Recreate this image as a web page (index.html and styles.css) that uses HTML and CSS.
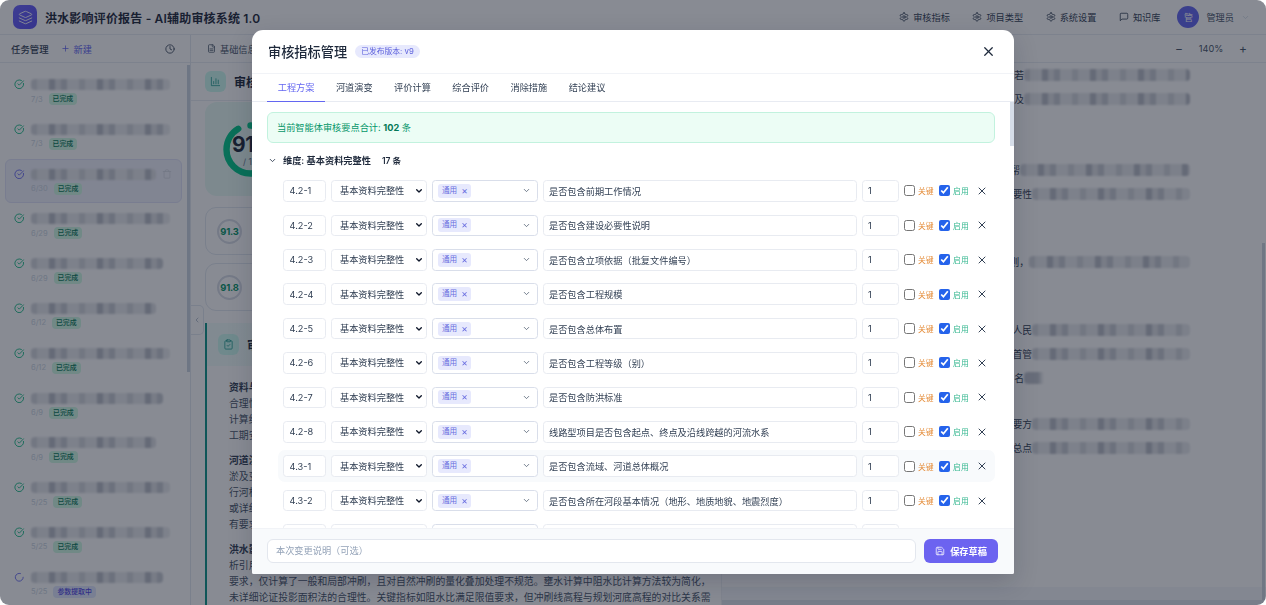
FILE: index.html
```html
<!DOCTYPE html>
<html lang="zh-CN">
<head>
<meta charset="utf-8">
<title>洪水影响评价报告 - AI辅助审核系统 1.0</title>
<link rel="stylesheet" href="styles.css">
</head>
<body>
<svg class="defs" width="0" height="0" aria-hidden="true">
  <symbol id="i-gear" viewBox="0 0 24 24"><path d="M12.22 2h-.44a2 2 0 0 0-2 2v.18a2 2 0 0 1-1 1.73l-.43.25a2 2 0 0 1-2 0l-.15-.08a2 2 0 0 0-2.73.73l-.22.38a2 2 0 0 0 .73 2.73l.15.1a2 2 0 0 1 1 1.72v.51a2 2 0 0 1-1 1.74l-.15.09a2 2 0 0 0-.73 2.73l.22.38a2 2 0 0 0 2.73.73l.15-.08a2 2 0 0 1 2 0l.43.25a2 2 0 0 1 1 1.73V20a2 2 0 0 0 2 2h.44a2 2 0 0 0 2-2v-.18a2 2 0 0 1 1-1.73l.43-.25a2 2 0 0 1 2 0l.15.08a2 2 0 0 0 2.73-.73l.22-.39a2 2 0 0 0-.73-2.73l-.15-.08a2 2 0 0 1-1-1.74v-.5a2 2 0 0 1 1-1.74l.15-.09a2 2 0 0 0 .73-2.73l-.22-.38a2 2 0 0 0-2.73-.73l-.15.08a2 2 0 0 1-2 0l-.43-.25a2 2 0 0 1-1-1.73V4a2 2 0 0 0-2-2z"/><circle cx="12" cy="12" r="3"/></symbol>
  <symbol id="i-check" viewBox="0 0 24 24"><path d="M21.801 10A10 10 0 1 1 17 3.335"/><path d="m9 11 3 3L22 4"/></symbol>
  <symbol id="i-x" viewBox="0 0 24 24"><path d="M18 6 6 18"/><path d="m6 6 12 12"/></symbol>
  <symbol id="i-down" viewBox="0 0 24 24"><path d="m6 9 6 6 6-6"/></symbol>
</svg>

<div class="app">
  <header class="topbar">
    <div class="logo">
      <svg class="logo-icon" viewBox="0 0 24 24"><path d="m12.83 2.18a2 2 0 0 0-1.66 0L2.6 6.08a1 1 0 0 0 0 1.83l8.58 3.91a2 2 0 0 0 1.66 0l8.58-3.9a1 1 0 0 0 0-1.83Z"/><path d="m22 17.65-9.17 4.16a2 2 0 0 1-1.66 0L2 17.65"/><path d="m22 12.65-9.17 4.16a2 2 0 0 1-1.66 0L2 12.65"/></svg>
    </div>
    <h1 class="app-title">洪水影响评价报告 - AI辅助审核系统 1.0</h1>
    <nav class="topnav">
      <a class="nav-link"><svg class="nav-icon"><use href="#i-gear"/></svg>审核指标</a>
      <a class="nav-link"><svg class="nav-icon"><use href="#i-gear"/></svg>项目类型</a>
      <a class="nav-link"><svg class="nav-icon"><use href="#i-gear"/></svg>系统设置</a>
      <a class="nav-link"><svg class="nav-icon" viewBox="0 0 24 24"><path d="M21 15a2 2 0 0 1-2 2H7l-4 4V5a2 2 0 0 1 2-2h14a2 2 0 0 1 2 2z"/></svg>知识库</a>
    </nav>
    <div class="user">
      <span class="avatar">管</span>
      <span class="user-name">管理员</span>
      <svg class="user-caret"><use href="#i-down"/></svg>
    </div>
  </header>

  <div class="main">
    <aside class="sidebar">
      <div class="side-head">
        <span class="side-title">任务管理</span>
        <span class="side-new"><svg viewBox="0 0 24 24"><path d="M5 12h14"/><path d="M12 5v14"/></svg>新建</span>
        <svg class="clock" viewBox="0 0 24 24"><circle cx="12" cy="12" r="10"/><path d="M12 6v6l4 2"/></svg>
      </div>
      <div class="task-list">
        <div class="task"><svg class="task-icon"><use href="#i-check"/></svg><div class="task-body"><div class="blur t1"></div><div class="task-meta"><span class="date">7/3</span><span class="tag-done">已完成</span></div></div></div>
        <div class="task"><svg class="task-icon"><use href="#i-check"/></svg><div class="task-body"><div class="blur t1"></div><div class="task-meta"><span class="date">7/3</span><span class="tag-done">已完成</span></div></div></div>
        <div class="task task-active"><svg class="task-icon icon-purple"><use href="#i-check"/></svg><div class="task-body"><div class="blur t2"></div><div class="task-meta"><span class="date">6/30</span><span class="tag-done">已完成</span></div></div>
          <svg class="task-trash" viewBox="0 0 24 24"><path d="M3 6h18"/><path d="M19 6v14a2 2 0 0 1-2 2H7a2 2 0 0 1-2-2V6"/><path d="M8 6V4a2 2 0 0 1 2-2h4a2 2 0 0 1 2 2v2"/></svg></div>
        <div class="task"><svg class="task-icon"><use href="#i-check"/></svg><div class="task-body"><div class="blur t1"></div><div class="task-meta"><span class="date">6/29</span><span class="tag-done">已完成</span></div></div></div>
        <div class="task"><svg class="task-icon"><use href="#i-check"/></svg><div class="task-body"><div class="blur t3"></div><div class="task-meta"><span class="date">6/29</span><span class="tag-done">已完成</span></div></div></div>
        <div class="task"><svg class="task-icon"><use href="#i-check"/></svg><div class="task-body"><div class="blur t2"></div><div class="task-meta"><span class="date">6/12</span><span class="tag-done">已完成</span></div></div></div>
        <div class="task"><svg class="task-icon"><use href="#i-check"/></svg><div class="task-body"><div class="blur t1"></div><div class="task-meta"><span class="date">6/12</span><span class="tag-done">已完成</span></div></div></div>
        <div class="task"><svg class="task-icon"><use href="#i-check"/></svg><div class="task-body"><div class="blur t3"></div><div class="task-meta"><span class="date">6/9</span><span class="tag-done">已完成</span></div></div></div>
        <div class="task"><svg class="task-icon"><use href="#i-check"/></svg><div class="task-body"><div class="blur t2"></div><div class="task-meta"><span class="date">6/9</span><span class="tag-done">已完成</span></div></div></div>
        <div class="task"><svg class="task-icon"><use href="#i-check"/></svg><div class="task-body"><div class="blur t1"></div><div class="task-meta"><span class="date">5/25</span><span class="tag-done">已完成</span></div></div></div>
        <div class="task"><svg class="task-icon"><use href="#i-check"/></svg><div class="task-body"><div class="blur t1"></div><div class="task-meta"><span class="date">5/25</span><span class="tag-done">已完成</span></div></div></div>
        <div class="task"><svg class="task-icon icon-purple" viewBox="0 0 24 24"><path d="M21 12a9 9 0 1 1-6.219-8.56"/></svg><div class="task-body"><div class="blur t3"></div><div class="task-meta"><span class="date">5/25</span><span class="tag-busy">参数提取中</span></div></div></div>
      </div>
      <div class="side-thumb"></div>
    </aside>

    <section class="center">
      <button class="collapse"><svg viewBox="0 0 24 24"><path d="m15 18-6-6 6-6"/></svg></button>
      <div class="center-tabs">
        <svg class="file-icon" viewBox="0 0 24 24"><path d="M15 2H6a2 2 0 0 0-2 2v16a2 2 0 0 0 2 2h12a2 2 0 0 0 2-2V7Z"/><path d="M14 2v4a2 2 0 0 0 2 2h4"/><path d="M16 13H8"/><path d="M16 17H8"/></svg>
        <span>基础信息</span>
      </div>
      <div class="center-head">
        <span class="square-icon"><svg viewBox="0 0 24 24"><path d="M3 3v18h18"/><path d="M8 17v-5"/><path d="M13 17V6"/><path d="M18 17v-8"/></svg></span>
        <span class="center-title">审核结果</span>
      </div>
      <div class="center-body">
        <div class="score-card">
          <div class="ring">
            <svg viewBox="0 0 55 55"><circle class="ring-arc" cx="27.5" cy="27.5" r="24"/></svg>
            <div class="ring-text"><b>91.5</b><span>/ 100</span></div>
          </div>
        </div>
        <div class="mini-card"><div class="mini-ring">91.3</div></div>
        <div class="mini-card"><div class="mini-ring">91.8</div></div>
        <div class="detail">
          <div class="detail-head">
            <span class="square-icon"><svg viewBox="0 0 24 24"><rect x="8" y="2" width="8" height="4" rx="1"/><path d="M16 4h2a2 2 0 0 1 2 2v14a2 2 0 0 1-2 2H6a2 2 0 0 1-2-2V6a2 2 0 0 1 2-2h2"/><path d="m9 14 2 2 4-4"/></svg></span>
            <span class="center-title">审核意见</span>
          </div>
          <div class="detail-text">
            <p class="para-head">资料与方法</p>
            <p>合理性分析基本满足要求</p>
            <p>计算结果较为完整</p>
            <p>工期安排基本合理</p>
            <p class="para-head gap">河道演变</p>
            <p>淤及变化分析基本完整</p>
            <p>行河标准符合要求</p>
            <p>或详细说明</p>
            <p>有要求</p>
            <p class="para-head gap">洪水影响</p>
            <p>析引用资料基本可靠</p>
            <p>要求，仅计算了一般和局部冲刷，且对自然冲刷的量化叠加处理不规范。壅水计算中阻水比计算方法较为简化，</p>
            <p>未详细论证投影面积法的合理性。关键指标如阻水比满足限值要求，但冲刷线高程与规划河底高程的对比关系需</p>
          </div>
        </div>
      </div>
    </section>

    <section class="doc">
      <div class="doc-tools">
        <span class="zoom-btn">−</span><span class="zoom-val">140%</span><span class="zoom-btn">+</span>
      </div>
      <div class="doc-text">
        <div class="doc-line"><span>若</span><i class="blur d1"></i></div>
        <div class="doc-line"><span>及</span><i class="blur d1"></i></div>
        <div class="doc-line sec"><span>帮</span><i class="blur d2"></i></div>
        <div class="doc-line"><span>要性</span><i class="blur d4"></i></div>
        <div class="doc-line sec2"><span>则，</span><i class="blur d5"></i></div>
        <div class="doc-line sec2"><span>人民</span><i class="blur d4"></i></div>
        <div class="doc-line"><span>首管</span><i class="blur d4"></i></div>
        <div class="doc-line"><span>名</span><i class="blur d3"></i></div>
        <div class="doc-line sec3"><span>要方</span><i class="blur d4"></i></div>
        <div class="doc-line"><span>总点</span><i class="blur d4"></i></div>
      </div>
      <div class="doc-foot"></div>
      <div class="doc-hbar"></div>
      <div class="doc-thumb"></div>
    </section>
  </div>
</div>

<div class="overlay"></div>

<div class="modal">
  <div class="modal-head">
    <h2 class="modal-title">审核指标管理</h2>
    <span class="version">已发布版本: v9</span>
    <svg class="modal-close"><use href="#i-x"/></svg>
  </div>
  <div class="tabs">
    <span class="tab tab-on">工程方案</span>
    <span class="tab">河道演变</span>
    <span class="tab">评价计算</span>
    <span class="tab">综合评价</span>
    <span class="tab">消除措施</span>
    <span class="tab">结论建议</span>
  </div>
  <div class="modal-body">
    <div class="alert">当前智能体审核要点合计: <b>102</b> 条</div>
    <div class="dim-head">
      <svg class="dim-caret"><use href="#i-down"/></svg>
      <span class="dim-name">维度: 基本资料完整性</span>
      <span class="dim-count">17 条</span>
    </div>
    <div class="rows">
      <div class="row"><input class="field f-id" value="4.2-1"><select class="field f-sel"><option>基本资料完整性</option></select><div class="field f-tags"><span class="chip">通用<span class="chip-x">×</span></span><svg class="tags-caret"><use href="#i-down"/></svg></div><input class="field f-text" value="是否包含前期工作情况"><input class="field f-num" value="1"><label class="chk key"><input type="checkbox">关键</label><label class="chk on"><input type="checkbox" checked>启用</label><svg class="row-x"><use href="#i-x"/></svg></div>
      <div class="row"><input class="field f-id" value="4.2-2"><select class="field f-sel"><option>基本资料完整性</option></select><div class="field f-tags"><span class="chip">通用<span class="chip-x">×</span></span><svg class="tags-caret"><use href="#i-down"/></svg></div><input class="field f-text" value="是否包含建设必要性说明"><input class="field f-num" value="1"><label class="chk key"><input type="checkbox">关键</label><label class="chk on"><input type="checkbox" checked>启用</label><svg class="row-x"><use href="#i-x"/></svg></div>
      <div class="row"><input class="field f-id" value="4.2-3"><select class="field f-sel"><option>基本资料完整性</option></select><div class="field f-tags"><span class="chip">通用<span class="chip-x">×</span></span><svg class="tags-caret"><use href="#i-down"/></svg></div><input class="field f-text" value="是否包含立项依据（批复文件编号）"><input class="field f-num" value="1"><label class="chk key"><input type="checkbox">关键</label><label class="chk on"><input type="checkbox" checked>启用</label><svg class="row-x"><use href="#i-x"/></svg></div>
      <div class="row"><input class="field f-id" value="4.2-4"><select class="field f-sel"><option>基本资料完整性</option></select><div class="field f-tags"><span class="chip">通用<span class="chip-x">×</span></span><svg class="tags-caret"><use href="#i-down"/></svg></div><input class="field f-text" value="是否包含工程规模"><input class="field f-num" value="1"><label class="chk key"><input type="checkbox">关键</label><label class="chk on"><input type="checkbox" checked>启用</label><svg class="row-x"><use href="#i-x"/></svg></div>
      <div class="row"><input class="field f-id" value="4.2-5"><select class="field f-sel"><option>基本资料完整性</option></select><div class="field f-tags"><span class="chip">通用<span class="chip-x">×</span></span><svg class="tags-caret"><use href="#i-down"/></svg></div><input class="field f-text" value="是否包含总体布置"><input class="field f-num" value="1"><label class="chk key"><input type="checkbox">关键</label><label class="chk on"><input type="checkbox" checked>启用</label><svg class="row-x"><use href="#i-x"/></svg></div>
      <div class="row"><input class="field f-id" value="4.2-6"><select class="field f-sel"><option>基本资料完整性</option></select><div class="field f-tags"><span class="chip">通用<span class="chip-x">×</span></span><svg class="tags-caret"><use href="#i-down"/></svg></div><input class="field f-text" value="是否包含工程等级（别）"><input class="field f-num" value="1"><label class="chk key"><input type="checkbox">关键</label><label class="chk on"><input type="checkbox" checked>启用</label><svg class="row-x"><use href="#i-x"/></svg></div>
      <div class="row"><input class="field f-id" value="4.2-7"><select class="field f-sel"><option>基本资料完整性</option></select><div class="field f-tags"><span class="chip">通用<span class="chip-x">×</span></span><svg class="tags-caret"><use href="#i-down"/></svg></div><input class="field f-text" value="是否包含防洪标准"><input class="field f-num" value="1"><label class="chk key"><input type="checkbox">关键</label><label class="chk on"><input type="checkbox" checked>启用</label><svg class="row-x"><use href="#i-x"/></svg></div>
      <div class="row"><input class="field f-id" value="4.2-8"><select class="field f-sel"><option>基本资料完整性</option></select><div class="field f-tags"><span class="chip">通用<span class="chip-x">×</span></span><svg class="tags-caret"><use href="#i-down"/></svg></div><input class="field f-text" value="线路型项目是否包含起点、终点及沿线跨越的河流水系"><input class="field f-num" value="1"><label class="chk key"><input type="checkbox">关键</label><label class="chk on"><input type="checkbox" checked>启用</label><svg class="row-x"><use href="#i-x"/></svg></div>
      <div class="row row-hover"><input class="field f-id" value="4.3-1"><select class="field f-sel"><option>基本资料完整性</option></select><div class="field f-tags"><span class="chip">通用<span class="chip-x">×</span></span><svg class="tags-caret"><use href="#i-down"/></svg></div><input class="field f-text" value="是否包含流域、河道总体概况"><input class="field f-num" value="1"><label class="chk key"><input type="checkbox">关键</label><label class="chk on"><input type="checkbox" checked>启用</label><svg class="row-x"><use href="#i-x"/></svg></div>
      <div class="row"><input class="field f-id" value="4.3-2"><select class="field f-sel"><option>基本资料完整性</option></select><div class="field f-tags"><span class="chip">通用<span class="chip-x">×</span></span><svg class="tags-caret"><use href="#i-down"/></svg></div><input class="field f-text" value="是否包含所在河段基本情况（地形、地质地貌、地震烈度）"><input class="field f-num" value="1"><label class="chk key"><input type="checkbox">关键</label><label class="chk on"><input type="checkbox" checked>启用</label><svg class="row-x"><use href="#i-x"/></svg></div>
      <div class="row"><input class="field f-id" value="4.3-3"><select class="field f-sel"><option>基本资料完整性</option></select><div class="field f-tags"><span class="chip">通用<span class="chip-x">×</span></span><svg class="tags-caret"><use href="#i-down"/></svg></div><input class="field f-text" value="是否包含水文气象资料"><input class="field f-num" value="1"><label class="chk key"><input type="checkbox">关键</label><label class="chk on"><input type="checkbox" checked>启用</label><svg class="row-x"><use href="#i-x"/></svg></div>
    </div>
    <div class="modal-thumb"></div>
  </div>
  <div class="modal-foot">
    <input class="note" placeholder="本次变更说明（可选）">
    <button class="save">
      <svg viewBox="0 0 24 24"><path d="M15.2 3a2 2 0 0 1 1.4.6l3.8 3.8a2 2 0 0 1 .6 1.4V19a2 2 0 0 1-2 2H5a2 2 0 0 1-2-2V5a2 2 0 0 1 2-2z"/><path d="M17 21v-7a1 1 0 0 0-1-1H8a1 1 0 0 0-1 1v7"/><path d="M7 3v4a1 1 0 0 0 1 1h7"/></svg>
      保存草稿
    </button>
  </div>
</div>
</body>
</html>
```

FILE: styles.css
```css
* { box-sizing: border-box; }
html, body { margin: 0; height: 100%; overflow: hidden; background: #fff; }
body { font-family: Inter, "Noto Sans CJK SC", sans-serif; font-size: 9.2px; color: #334155; }
svg { fill: none; stroke: currentColor; stroke-width: 2; stroke-linecap: round; stroke-linejoin: round; }
.defs { position: absolute; }
p, h1, h2 { margin: 0; }

.app { height: 605px; display: flex; flex-direction: column; background: #fff; border-radius: 9px; overflow: hidden; }

/* top bar */
.topbar { height: 35px; flex: none; display: flex; align-items: center; padding: 0 16px 0 13px; background: #fff; border-bottom: 1px solid #e8ecf2; }
.logo { width: 24px; height: 24px; border-radius: 7px; background: linear-gradient(135deg, #6a63ff, #5b50f0); display: flex; align-items: center; justify-content: center; color: #fff; }
.logo-icon { width: 15px; height: 15px; stroke-width: 1.6; opacity: .9; }
.app-title { font-size: 12px; font-weight: 600; color: #1e293b; margin-left: 8px; white-space: nowrap; letter-spacing: .015em; }
.topnav { margin-left: auto; display: flex; gap: 22.5px; }
.nav-link { display: flex; align-items: center; gap: 4px; color: #334155; white-space: nowrap; }
.nav-icon { width: 10px; height: 10px; }
.user { display: flex; align-items: center; margin-left: 17px; }
.avatar { width: 22px; height: 22px; border-radius: 50%; background: #6366f1; color: #fff; font-size: 9px; display: flex; align-items: center; justify-content: center; }
.user-name { margin-left: 7px; color: #475569; }
.user-caret { width: 9px; height: 9px; margin-left: 7px; color: #cbd5e1; }

.main { flex: 1; display: flex; min-height: 0; }

/* sidebar */
.sidebar { width: 191px; flex: none; position: relative; border-right: 1px solid #e2e8f0; display: flex; flex-direction: column; overflow: hidden; }
.side-head { height: 28px; flex: none; display: flex; align-items: center; padding: 0 15px 0 11px; border-bottom: 1px solid #e8ecf2; }
.side-title { font-size: 9.4px; font-weight: 500; color: #334155; }
.side-new { margin-left: 12px; color: #6366f1; display: flex; align-items: center; gap: 4px; }
.side-new svg { width: 9px; height: 9px; }
.clock { width: 10px; height: 10px; margin-left: auto; stroke: #334155; }
.task-list { padding: 6px 8px 0 5px; display: flex; flex-direction: column; gap: .8px; }
.task { height: 44px; flex: none; display: flex; align-items: flex-start; padding: 9px 8px 0 8px; border: 1px solid transparent; border-radius: 6px; position: relative; }
.task-active { background: #f1f2fd; border-color: #e0e3f8; }
.task-icon { width: 10.5px; height: 10.5px; flex: none; color: #10b981; margin-right: 6.5px; }
.icon-purple { color: #6366f1; }
.task-body { flex: 1; min-width: 0; }
.task-meta { display: flex; align-items: center; gap: 6px; margin-top: 3px; }
.date { font-size: 7.5px; color: #cbd5e1; }
.tag-done, .tag-busy { font-size: 6.9px; line-height: 12px; padding: 0 4px; border-radius: 4px; background: #d1fae5; color: #047857; font-weight: 500; }
.tag-busy { background: #e0e7ff; color: #4f46e5; }
.task-trash { width: 10px; height: 10px; position: absolute; right: 9px; top: 9px; color: #d5dae3; }
.side-thumb { position: absolute; right: 0; top: 30px; width: 3px; height: 307px; background: #cbd5e1; }

.blur { display: block; height: 11px; filter: blur(1.1px); border-radius: 4px;
  background: repeating-linear-gradient(90deg, #d3d6dc 0 6px, #e6e8ec 6px 18px, #b8bcc6 18px 24px, #dee0e5 24px 30px, #c6cad2 30px 36px, #e9ebee 36px 48px); }
.t1 { width: 139px; }
.t2 { width: 125px; }
.t3 { width: 132px; }

/* center */
.center { width: 531px; flex: none; position: relative; display: flex; flex-direction: column; overflow: hidden; border-right: 1px solid #eef1f5; }
.collapse { position: absolute; left: 0; top: 270px; width: 13px; height: 30px; padding: 0; border: 1px solid #e2e8f0; border-left: none; border-radius: 0 5px 5px 0; background: #fff; color: #94a3b8; display: flex; align-items: center; justify-content: center; }
.collapse svg { width: 8px; height: 8px; }
.center-tabs { height: 28px; flex: none; display: flex; align-items: center; gap: 4px; padding-left: 16px; border-bottom: 1px solid #e8ecf2; color: #475569; }
.file-icon { width: 9px; height: 9px; }
.center-head { height: 38px; flex: none; display: flex; align-items: center; gap: 8px; padding: 0 14px; border-bottom: 1px solid #e8ecf2; }
.square-icon { width: 21px; height: 21px; border-radius: 6px; background: #ccfbf1; color: #0f9488; display: flex; align-items: center; justify-content: center; }
.square-icon svg { width: 11px; height: 11px; stroke-width: 1.6; }
.center-title { font-size: 12px; font-weight: 600; color: #1e293b; }
.center-body { padding: 1px 5px 0 14px; display: flex; flex-direction: column; }
.score-card { height: 94px; border-radius: 12px; background: #e8fbf5; padding: 20px 0 0 18px; }
.ring { width: 55px; height: 55px; position: relative; }
.ring svg { width: 55px; height: 55px; stroke-width: 6.4; }
.ring-arc { stroke: #00c98a; stroke-dasharray: 137 150.8; transform: rotate(-90deg); transform-origin: 27.5px 27.5px; }
.ring-text { position: absolute; left: 9px; top: 11px; white-space: nowrap; }
.ring-text b { display: block; font-size: 21px; line-height: 24px; font-weight: 700; color: #1e293b; letter-spacing: -.02em; }
.ring-text span { display: block; margin-left: 11px; font-size: 8.5px; line-height: 10px; color: #64748b; }
.mini-card { height: 48px; margin-top: 8px; border: 1px solid #e2e8f0; border-radius: 11px; padding: 0 0 0 11px; display: flex; align-items: center; }
.score-card + .mini-card { margin-top: 11px; }
.mini-ring { width: 25px; height: 25px; flex: none; border-radius: 50%; border: 2px solid #d8dde6; font-size: 9.4px; letter-spacing: -.02em; font-weight: 700; color: #059669; display: flex; align-items: center; justify-content: center; white-space: nowrap; }
.detail { margin-top: 12px; border-left: 2px solid #0d9488; }
.detail-head { height: 43px; display: flex; align-items: center; gap: 8px; padding: 0 0 0 11px; background: linear-gradient(90deg, #f0fdfa, #fff 70%); }
.detail-text { padding: 13px 0 0 22px; font-size: 9.84px; line-height: 16.1px; color: #475569; }
.detail-text p { white-space: nowrap; overflow: hidden; }
.para-head { font-weight: 600; color: #334155; }
.para-head.gap { margin-top: 8.5px; }

/* document */
.doc { flex: 1; min-width: 0; position: relative; display: flex; flex-direction: column; }
.doc-tools { height: 28px; flex: none; display: flex; align-items: center; justify-content: flex-end; padding-right: 17px; border-bottom: 1px solid #e8ecf2; color: #475569; }
.zoom-btn { font-size: 12px; width: 12px; text-align: center; }
.zoom-val { width: 52px; text-align: center; font-size: 9.2px; }
.doc-text { flex: 1; padding: 0 76px 0 0; font-size: 9.8px; color: #334155; }
.doc-line { height: 24px; display: flex; align-items: center; justify-content: flex-end; }
.doc-line span { white-space: nowrap; }
.doc-line .blur { height: 12px; }
.sec { margin-top: 47px; }
.sec2 { margin-top: 44px; }
.sec3 { margin-top: 22px; }
.d1 { width: 166px; }
.d2 { width: 170px; }
.d4 { width: 158px; }
.d5 { width: 161px; }
.d3 { width: 166px; background: linear-gradient(90deg, #bfc3cc 0 14px, transparent 20px); }
.doc-foot { height: 13px; flex: none; background: #f5f7fa; }
.doc-hbar { height: 5px; flex: none; background: #dfe4ec; }
.doc-thumb { position: absolute; right: 1px; top: 208px; width: 3px; height: 357px; background: #cfd6e0; }

/* overlay */
.overlay { position: fixed; inset: 0; background: rgba(17, 24, 39, .5); border-radius: 9px; }

/* modal */
.modal { position: fixed; left: 252px; top: 30px; width: 762px; height: 544px; background: #fff; border-radius: 11px 11px 2px 2px; display: flex; flex-direction: column; overflow: hidden; box-shadow: 0 8px 24px rgba(15, 23, 42, .18); }
.modal-head { height: 43.5px; flex: none; display: flex; align-items: center; padding: 0 18px 0 16px; border-bottom: 1px solid #f1f3f7; }
.modal-title { font-size: 13.2px; font-weight: 500; color: #1e293b; }
.version { margin-left: 8px; height: 13px; line-height: 13px; padding: 0 6px; border-radius: 7px; background: #e7e9fd; color: #5b5fdc; font-size: 7.8px; white-space: nowrap; }
.modal-close { width: 15px; height: 15px; margin-left: auto; color: #1e293b; }

.tabs { height: 28.5px; flex: none; display: flex; padding-left: 15px; border-bottom: 1px solid #e8ebf2; }
.tab { width: 58.2px; text-align: center; line-height: 27px; color: #334155; font-size: 9.2px; }
.tab-on { color: #6366f1; border-bottom: 1.5px solid #6366f1; height: 28.5px; }

.modal-body { flex: 1; min-height: 0; overflow: hidden; position: relative; padding: 10px 19px 0 15px; }
.modal-thumb { position: absolute; right: 0; top: 0; width: 4px; height: 44px; background: #d6dde8; }
.alert { height: 31px; line-height: 29px; padding-left: 9px; border: 1px solid #c2f2de; border-radius: 6px; background: #ecfdf5; color: #059669; font-size: 9.2px; }
.alert b { color: #047857; font-weight: 700; }
.dim-head { height: 16px; margin-top: 9px; display: flex; align-items: center; }
.dim-caret { width: 9px; height: 9px; margin-left: 1px; color: #334155; stroke-width: 2.4; }
.dim-name { margin-left: 6px; font-weight: 600; color: #1e293b; font-size: 9.2px; }
.dim-count { margin-left: 11px; font-weight: 600; color: #1e293b; font-size: 8.5px; }

.rows { margin: 6.8px 0 0 11px; display: flex; flex-direction: column; gap: 2px; }
.row { height: 32.4px; flex: none; display: flex; align-items: center; padding: 0 5px; border-radius: 7px; }
.row-hover { background: #f8fafc; }
.field { height: 21.6px; flex: none; margin: 0; border: 1px solid #e8ebf1; border-radius: 3.5px; background: #fff; color: #334155; font: inherit; font-size: 9.2px; outline: none; }
input.field { padding: 0 5px; }
.f-id { width: 43px; }
input.f-id { padding-left: 5.5px; }
.f-sel { width: 96px; margin-left: 5px; padding: 0 0 0 8px; appearance: none; background: #fff url("data:image/svg+xml,%3Csvg xmlns='http://www.w3.org/2000/svg' viewBox='0 0 24 24' fill='none' stroke='%230f172a' stroke-width='4' stroke-linecap='round' stroke-linejoin='round'%3E%3Cpath d='m5 8 7 7 7-7'/%3E%3C/svg%3E") no-repeat right 3px center / 8px 8px; }
.f-tags { width: 106px; margin-left: 5px; border-color: #d9deea; display: flex; align-items: center; padding: 0 0 0 5px; position: relative; }
.chip { height: 14px; line-height: 14px; width: 33px; padding-left: 4px; border-radius: 3px; background: #e7e9fd; color: #6a6ee0; font-size: 7.6px; display: flex; align-items: center; white-space: nowrap; }
.chip-x { font-size: 10px; line-height: 14px; margin-left: 4px; transform: translateY(-1px); }
.tags-caret { width: 9px; height: 9px; position: absolute; right: 6px; top: 5px; color: #475569; }
.f-text { width: 314px; margin-left: 5px; }
.f-num { width: 37px; margin-left: 5px; }
.chk { display: flex; align-items: center; font-size: 7.8px; white-space: nowrap; }
.chk input { width: 11px; height: 11px; margin: 0 3px 0 0; accent-color: #2563eb; }
.key { margin-left: 5px; color: #e58e3c; }
.on { margin-left: 5.5px; color: #34b78f; }
.row-x { width: 12px; height: 12px; margin-left: 7px; color: #334155; }

.modal-foot { height: 46px; flex: none; display: flex; align-items: center; gap: 8px; padding: 0 16px 2px 15px; background: #f8fafc; border-top: 1px solid #f1f3f7; }
.note { width: 649px; height: 24px; border: 1px solid #e3e7ee; border-radius: 6px; padding: 0 8px; font: inherit; font-size: 9.2px; outline: none; }
.note::placeholder { color: #94a3b8; }
.save { width: 74px; height: 24px; border: none; border-radius: 6px; background: #6c63f0; color: #fff; font: inherit; font-size: 9.2px; font-weight: 600; display: flex; align-items: center; justify-content: center; gap: 5px; padding: 0; }
.save svg { width: 10px; height: 10px; stroke-width: 1.8; }
```
